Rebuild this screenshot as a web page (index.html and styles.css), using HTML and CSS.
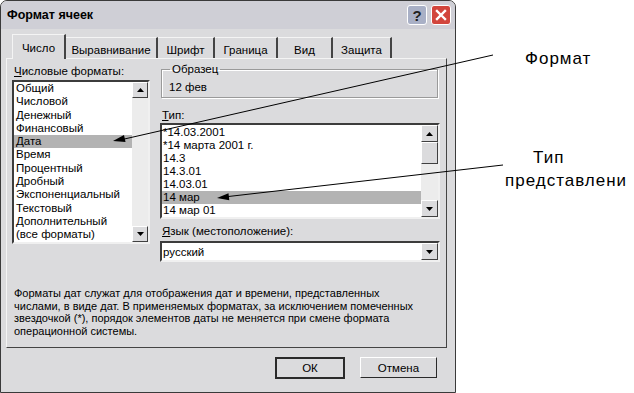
FILE: index.html
```html
<!DOCTYPE html>
<html lang="ru">
<head>
    <meta charset="UTF-8">
    <title>Формат ячеек</title>
    <link rel="stylesheet" href="styles.css">
</head>
<body>
<div class="page">

    <div class="dialog">
        <div class="titlebar">
            <span class="title">Формат ячеек</span>
            <span class="tb-btn help">?</span>
            <span class="tb-btn close">
                <svg width="12" height="12" viewBox="0 0 12 12"><path d="M2 2 L10 10 M10 2 L2 10" stroke="#fff" stroke-width="2.4" stroke-linecap="square"/></svg>
            </span>
        </div>

        <div class="content">
            <div class="tabs">
                <div class="tab tab-num active">Число</div>
                <div class="tab tab-align">Выравнивание</div>
                <div class="tab tab-font">Шрифт</div>
                <div class="tab tab-border">Граница</div>
                <div class="tab tab-view">Вид</div>
                <div class="tab tab-protect">Защита</div>
            </div>

            <div class="panel">
                <div class="col-left">
                    <div class="label"><u>Ч</u>исловые форматы:</div>
                    <div class="listbox formats">
                        <div class="items">
                            <div class="item">Общий</div>
                            <div class="item">Числовой</div>
                            <div class="item">Денежный</div>
                            <div class="item">Финансовый</div>
                            <div class="item selected">Дата</div>
                            <div class="item">Время</div>
                            <div class="item">Процентный</div>
                            <div class="item">Дробный</div>
                            <div class="item">Экспоненциальный</div>
                            <div class="item">Текстовый</div>
                            <div class="item">Дополнительный</div>
                            <div class="item">(все форматы)</div>
                        </div>
                        <div class="vscroll">
                            <div class="sbtn"><svg width="7" height="4"><polygon points="0,4 7,4 3.5,0" fill="#000"/></svg></div>
                            <div class="track"></div>
                            <div class="sbtn"><svg width="7" height="4"><polygon points="0,0 7,0 3.5,4" fill="#000"/></svg></div>
                        </div>
                    </div>
                </div>

                <div class="col-right">
                    <fieldset class="sample">
                        <legend>Образец</legend>
                        <div>12 фев</div>
                    </fieldset>

                    <div class="label label-type"><u>Т</u>ип:</div>
                    <div class="listbox types">
                        <div class="items">
                            <div class="item">*14.03.2001</div>
                            <div class="item">*14 марта 2001 г.</div>
                            <div class="item">14.3</div>
                            <div class="item">14.3.01</div>
                            <div class="item">14.03.01</div>
                            <div class="item selected">14 мар</div>
                            <div class="item">14 мар 01</div>
                        </div>
                        <div class="vscroll">
                            <div class="sbtn"><svg width="7" height="4"><polygon points="0,4 7,4 3.5,0" fill="#000"/></svg></div>
                            <div class="sbtn thumb"></div>
                            <div class="track"></div>
                            <div class="sbtn"><svg width="7" height="4"><polygon points="0,0 7,0 3.5,4" fill="#000"/></svg></div>
                        </div>
                    </div>

                    <div class="label label-lang"><u>Я</u>зык (местоположение):</div>
                    <div class="combo">
                        <span class="combo-value">русский</span>
                        <div class="sbtn combo-btn"><svg width="7" height="4"><polygon points="0,0 7,0 3.5,4" fill="#000"/></svg></div>
                    </div>
                </div>

                <p class="note">Форматы дат служат для отображения дат и времени, представленных<br>
                числами, в виде дат. В применяемых форматах, за исключением помеченных<br>
                звездочкой (*), порядок элементов даты не меняется при смене формата<br>
                операционной системы.</p>
            </div>

            <div class="buttons">
                <div class="btn default">ОК</div>
                <div class="btn">Отмена</div>
            </div>
        </div>
    </div>

    <div class="notes">
        <div class="note-format">Формат</div>
        <div class="note-type">Тип</div>
        <div class="note-type-2">представлени</div>
    </div>

    <!-- стрелки-выноски поверх окна -->
    <svg class="arrows" width="634" height="393" viewBox="0 0 634 393">
        <line x1="493" y1="55" x2="120" y2="140" stroke="#000" stroke-width="1"/>
        <polygon points="113,141 125.5,142 124,135" fill="#000"/>
        <line x1="503" y1="165" x2="224" y2="197" stroke="#000" stroke-width="1"/>
        <polygon points="217,198 229.3,200.3 228.5,193.3" fill="#000"/>
    </svg>
</div>
</body>
</html>
```

FILE: styles.css
```css
body {
    margin: 0;
    background-color: #fff;
    font-family: "Liberation Sans", Arial, sans-serif;
    font-size: 11.5px;
    color: #000;
}

.page {
    position: relative;
    display: flex;
    width: 634px;
    height: 393px;
    overflow: hidden;
}

/* Окно диалога */
.dialog {
    width: 456px;
    height: 393px;
    box-sizing: border-box;
    border: 1px solid #3a3a3a;
    border-radius: 7px 7px 0 0;
    background-color: #dbdbdd;
    overflow: hidden;
}

.titlebar {
    height: 28px;
    display: flex;
    align-items: center;
    padding: 0 4px 0 6px;
    background-color: #cfcfd6;
}

.title {
    flex: 1;
    font-size: 12.5px;
    font-weight: bold;
}

.tb-btn {
    width: 18px;
    height: 18px;
    margin-left: 4px;
    border: 1px solid #fff;
    border-radius: 3px;
    display: flex;
    align-items: center;
    justify-content: center;
}

.help {
    background-color: #a9b0c6;
    color: #222;
    font-size: 15px;
    font-weight: bold;
}

.close {
    background-color: #d2453c;
}

.content {
    padding: 5px 8px 0 5px;
}

/* Вкладки */
.tabs {
    height: 24px;
    display: flex;
    align-items: flex-end;
    padding-left: 6px;
}

.tab {
    height: 21px;
    box-sizing: border-box;
    border-top: 1px solid #f4f4f4;
    border-right: 2px solid #444;
    display: flex;
    align-items: center;
    justify-content: center;
    padding-top: 4px;
}

.tab.active {
    height: 25px;
    margin-bottom: -1px;
    position: relative;
    z-index: 1;
    background-color: #dbdbdd;
    border-left: 1px solid #f4f4f4;
    padding-top: 2px;
}

.tab-num { width: 54px; }
.tab-align { width: 92px; }
.tab-font { width: 57px; }
.tab-border { width: 63px; }
.tab-view { width: 55px; }
.tab-protect { width: 59px; }

.panel {
    width: 441px;
    height: 290px;
    box-sizing: border-box;
    border: 1px solid #444;
    border-top-color: #f4f4f4;
    border-left-color: #f4f4f4;
    display: grid;
    grid-template-columns: 138px 280px;
    column-gap: 10px;
    align-content: start;
    padding: 0 6px 0 5px;
}

.label {
    line-height: 14px;
    margin-top: 5px;
    padding-left: 2px;
    white-space: nowrap;
}

.label-type {
    margin-top: 10px;
}

.label-lang {
    margin-top: 5px;
}

/* Списки */
.listbox {
    display: flex;
    box-sizing: border-box;
    border: 2px solid;
    border-color: #3c3c3c #f0f0f0 #f0f0f0 #3c3c3c;
    background-color: #fff;
    overflow: hidden;
}

.formats {
    height: 164px;
    margin-top: 2px;
}

.types {
    height: 96px;
    margin-top: 1px;
}

.items {
    flex: 1;
    overflow: hidden;
}

.item {
    padding-left: 1px;
    white-space: nowrap;
}

.formats .item {
    line-height: 13.3px;
    padding-left: 2px;
}

.types .items {
    padding-top: 1px;
}

.types .item {
    line-height: 13px;
}

.item.selected {
    background-color: #b3b3b3;
}

.vscroll {
    width: 16px;
    display: flex;
    flex-direction: column;
    background-color: #ececec;
}

.types .vscroll {
    width: 17px;
}

.sbtn {
    height: 16px;
    box-sizing: border-box;
    border: 1px solid;
    border-color: #fff #404040 #404040 #fff;
    background-color: #dbdbdd;
    display: flex;
    align-items: center;
    justify-content: center;
}

.types .sbtn {
    height: 17px;
}

.types .thumb {
    height: 22px;
}

.track {
    flex: 1;
}

.sample {
    margin: 3px 2px 0 1px;
    padding: 4px 7px 3px;
    border: 1px solid #9a9a9a;
    box-shadow: inset 1px 1px 0 #fff, 1px 1px 0 #fff;
    line-height: 14px;
}

.sample legend {
    padding: 0 2px;
    margin-left: 1px;
    line-height: 14px;
}

.combo {
    height: 21px;
    margin-top: 3px;
    box-sizing: border-box;
    border: 2px solid;
    border-color: #3c3c3c #f0f0f0 #f0f0f0 #3c3c3c;
    background-color: #fff;
    display: flex;
    align-items: center;
}

.combo-value {
    flex: 1;
    padding-left: 1px;
}

.combo-btn {
    width: 17px;
    height: 17px;
}

.note {
    grid-column: 1 / 3;
    margin: 25px 0 0 2px;
    font-size: 11px;
    line-height: 12.7px;
    white-space: nowrap;
}

/* Кнопки */
.buttons {
    display: flex;
    justify-content: flex-end;
    gap: 15px;
    margin-top: 9px;
    padding-right: 10px;
}

.btn {
    width: 77px;
    height: 21px;
    box-sizing: border-box;
    border: 1px solid;
    border-color: #fff #2a2a2a #2a2a2a #fff;
    display: flex;
    align-items: center;
    justify-content: center;
}

.btn.default {
    width: 70px;
    height: 22px;
    border: 2px solid #2a2a2a;
}

/* Подписи справа */
.notes {
    flex: 1;
    font-size: 17px;
    letter-spacing: 1px;
    white-space: nowrap;
}

.note-format {
    line-height: 20px;
    margin: 49px 0 0 69px;
}

.note-type {
    line-height: 23px;
    margin: 77px 0 0 77px;
}

.note-type-2 {
    line-height: 23px;
    margin-left: 49px;
}

.arrows {
    position: absolute;
    top: 0;
    left: 0;
    pointer-events: none;
}
```
